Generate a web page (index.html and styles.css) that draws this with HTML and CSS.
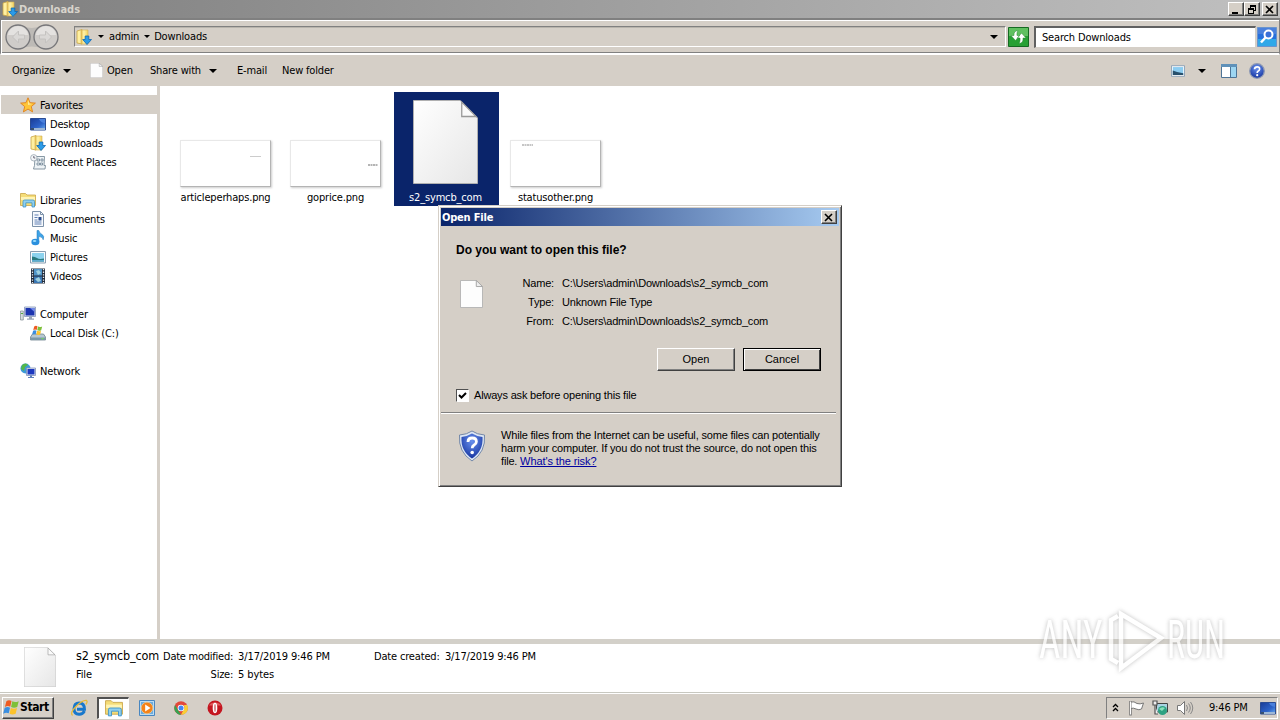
FILE: index.html
```html
<!DOCTYPE html>
<html lang="en">
<head>
    <meta charset="UTF-8">
    <meta name="viewport" content="width=device-width, initial-scale=1.0">
    <title>Downloads</title>
    <link rel="stylesheet" href="styles.css">
</head>
<body>

    <!-- Shared icons -->
    <svg class="defs" width="0" height="0">
        <defs>
            <linearGradient id="paper" x1="0" y1="0" x2="1" y2="1">
                <stop offset="0" stop-color="#fff"/><stop offset="1" stop-color="#e6e6e6"/>
            </linearGradient>
            <linearGradient id="folder" x1="0" y1="0" x2="1" y2="0">
                <stop offset="0" stop-color="#e0b848"/><stop offset="0.4" stop-color="#fff3a8"/><stop offset="1" stop-color="#f0d060"/>
            </linearGradient>
            <linearGradient id="screen" x1="0" y1="0" x2="1" y2="1">
                <stop offset="0" stop-color="#1a3c96"/><stop offset="0.6" stop-color="#2c62c8"/><stop offset="1" stop-color="#6aaef0"/>
            </linearGradient>
            <radialGradient id="blueball" cx="0.5" cy="0.3" r="0.7">
                <stop offset="0" stop-color="#6a92ee"/><stop offset="1" stop-color="#1534a0"/>
            </radialGradient>
        </defs>
        <symbol id="i-downloads" viewBox="0 0 16 16">
            <path d="M1 2l5-1.5V15L1 14z" fill="#fff0a0" stroke="#c9a544" stroke-width=".8"/>
            <path d="M5 1h7v14H5z" fill="url(#folder)" stroke="#d4b050" stroke-width=".6"/>
            <path d="M9.200 7h3.600v3.500H15.500L11 15.500 6.700 10.500H9.200z" fill="#2b9be8" stroke="#0b68b4" stroke-width=".8"/>
        </symbol>
        <symbol id="i-desktop" viewBox="0 0 16 16">
            <path d="M.5 2.500h15V14H.5z" fill="url(#screen)" stroke="#2a4c94"/>
            <path d="M9 3h6v4q-4 0-6-4z" fill="#4a80dc"/>
            <path d="M1 12h14v2H1z" fill="#9db7d6"/><path d="M1 12h3v2H1z" fill="#38506f"/>
        </symbol>
        <symbol id="i-star" viewBox="0 0 16 16">
            <path d="M8 .8l2.100 4.900 5.300.4-4.100 3.500 1.300 5.300L8 12.100l-4.600 2.800 1.300-5.300L.6 6.100l5.300-.4z" fill="#ffc538" stroke="#e0801c" stroke-width=".9"/>
            <path d="M8 3l1.300 3.500 3 .4-4.300 1z" fill="#ffeb9a"/>
        </symbol>
        <symbol id="i-recent" viewBox="0 0 16 16">
            <path d="M5 2.500h9.500l-.5 9h1.500l-.5 3.500H3.500l1-3.500z" fill="#eef3f6" stroke="#7a8c9a" stroke-width=".9"/>
            <path d="M7 5h2.500v2H7zM7 9h2.500v2H7zM11 5h2v2h-2zM10.500 9h2v2h-2z" fill="none" stroke="#6f8396" stroke-width=".8"/>
            <circle cx="3.800" cy="3.800" r="3.200" fill="#f4f6f8" stroke="#98a4ae" stroke-width=".8"/>
            <path d="M3.800 2v2h1.500" fill="none" stroke="#667"/>
        </symbol>
        <symbol id="i-library" viewBox="0 0 16 16">
            <path d="M.5 1.500h5L7 3h8.500v10.500H.5z" fill="#f5dd78" stroke="#c9a548" stroke-width=".8"/>
            <path d="M1 5h14v3H1z" fill="#fff4b4"/>
            <path d="M3 15V9.500Q3 8 4.500 8H13q1.500 0 1.500 1.500V15H12v-4.200H5.800V15z" fill="#8fd0f0" stroke="#3e93c8" stroke-width=".8"/>
        </symbol>
        <symbol id="i-document" viewBox="0 0 16 16">
            <path d="M2.500.5h8l3 3v12h-11z" fill="#f6f9fd" stroke="#7d92aa"/>
            <path d="M10.500.5v3h3" fill="none" stroke="#7d92aa"/>
            <path d="M4.500 4h4M4.500 6.500h3M4.500 9h3M4.500 11h7M4.500 13h7" stroke="#6180b4"/><path d="M8.500 6h3v3.500h-3z" fill="#2b4c8c"/>
        </symbol>
        <symbol id="i-music" viewBox="0 0 16 16">
            <path d="M7 .5h1.800q.5 2.500 3 3.700 3 1.800 1.400 5.600-.3-2.800-4.400-3.500V12H7z" fill="#3fa4e8" stroke="#1b74b8" stroke-width=".5"/>
            <ellipse cx="5.400" cy="12" rx="4" ry="3.300" fill="#2a90de"/><ellipse cx="4.600" cy="11" rx="1.800" ry="1.100" fill="#9adcfc"/>
        </symbol>
        <symbol id="i-picture" viewBox="0 0 16 16">
            <path d="M.5 2.500h15v11.500H.5z" fill="#f8fbfd" stroke="#8a9db0"/>
            <path d="M2 4h12v8.500H2z" fill="#8cd2ee"/><path d="M2 7.500q3 0 5 1.500t7 .5v3H2z" fill="#2a7b80"/><path d="M2 11h12v1.500H2z" fill="#5babd0"/>
        </symbol>
        <symbol id="i-video" viewBox="0 0 16 16">
            <path d="M1 .5h14v15H1z" fill="#222c3c"/><path d="M4 1h8v6.500H4z" fill="#5095c8"/><path d="M4 8.500h8V15H4z" fill="#3a77b4"/>
            <path d="M6 3l3-1 2 3-3 2zM5 11l4-2 2 4-3 1z" fill="#9fd0df"/>
            <path d="M2.500 1v14M13.500 1v14" stroke="#e8edf2" stroke-width="1.300" stroke-dasharray="1.300 1.300"/>
        </symbol>
        <symbol id="i-computer" viewBox="0 0 16 16">
            <path d="M.5 5h2.800v9H.5z" fill="#d6dcdf" stroke="#7c8890" stroke-width=".7"/><path d="M1 7.500h2" stroke="#5a4"/>
            <path d="M4.500 1h11v9.500h-11z" fill="#dfe6f2" stroke="#8494b8" stroke-width=".8"/><path d="M5.500 2h9v7.500h-9z" fill="#1c34b0"/><path d="M10 2h4.500v4z" fill="#7088e8"/>
            <path d="M9 10.500h3v2H14v1.200H7v-1.200h2z" fill="#98a4b8"/>
        </symbol>
        <symbol id="i-flag" viewBox="0 0 16 16">
            <path d="M3.200 2Q5.500.5 8 1.800L6.800 7.300Q4.500 6 1.800 7.500z" fill="#ee5b22"/>
            <path d="M8.800 2.200Q11.500 3.500 14.800 2L13.400 7.500Q10.500 9 7.600 7.600z" fill="#7ec03a"/>
            <path d="M1.600 8.300Q4.300 7 6.600 8.200L5.400 13.500Q3 12.300.2 13.800z" fill="#3a8ee0"/>
            <path d="M7.400 8.500Q10.400 9.900 13.200 8.400L11.900 13.800Q9 15.300 6.200 13.900z" fill="#fcc32c"/>
        </symbol>
        <symbol id="i-disk" viewBox="0 0 16 16">
            <path d="M2.500 9h11l2 3v3H.5v-3z" fill="#b7c8d2" stroke="#6f8490" stroke-width=".8"/><path d="M1 12.500h14V15H1z" fill="#7b98a8"/><path d="M11.500 13.700h2" stroke="#6eea4c"/>
            <use href="#i-flag" x="2" y="0" width="11" height="11"/>
        </symbol>
        <symbol id="i-network" viewBox="0 0 16 16">
            <circle cx="5.500" cy="5.500" r="5" fill="#3c98d8"/><path d="M2 2q4-3 6 0l-3 2-1 4-3-2zM6 6l4 0-2 4z" fill="#52b848"/>
            <path d="M6.500 5h9v7.500h-9z" fill="#dfe6f2" stroke="#8090b8" stroke-width=".8"/><path d="M7.500 6h7v5.500h-7z" fill="#1c38c0"/>
            <path d="M10 12.500h2v1.500h2v1H8v-1h2z" fill="#5d7fba"/>
        </symbol>
        <symbol id="i-file" viewBox="0 0 66 84" preserveAspectRatio="none">
            <path d="M.5.500H48L65.500 18V83.500H.5z" fill="url(#paper)" stroke="#b0b0b0" stroke-width="1"/>
            <path d="M49.500 2V16.500H64z" fill="#fafafa" stroke="#999" stroke-width="1.300"/>
        </symbol>
        <symbol id="i-page" viewBox="0 0 24 30" preserveAspectRatio="none">
            <path d="M.5.500H17L23.500 7V29.500H.5z" fill="#fdfdfd" stroke="#b4b4b4"/>
            <path d="M17 .5V7h6.500z" fill="#eee" stroke="#a4a4a4"/>
        </symbol>
    </svg>

    <div class="window">
        <div class="titlebar">
            <svg class="icon"><use href="#i-downloads"/></svg>
            <span class="title">Downloads</span>
            <div class="controls">
                <span class="ctl"><svg width="10" height="9"><path d="M1 7h6v2H1z"/></svg></span>
                <span class="ctl"><svg width="10" height="9"><path d="M3 0h6v6H7V5h1V2H4v1H3zM1 3h6v6H1zM2 5v3h4V5z" fill-rule="evenodd"/></svg></span>
                <span class="ctl close"><svg width="10" height="9"><path d="M1 1l7 7M8 1L1 8" stroke="#000" stroke-width="1.600"/></svg></span>
            </div>
        </div>

        <!-- Navigation -->
        <div class="navbar">
            <svg class="travel" width="56" height="30" viewBox="0 0 56 30">
                <path d="M13 3Q28 9 42 3V27Q28 22 13 27z" fill="#bdbab6"/>
                <g fill="#cfccc9" stroke="#77777a" stroke-width="1.300"><circle cx="14" cy="15" r="12"/><circle cx="42" cy="15" r="12"/></g>
                <path d="M4 13a10 9 0 0 1 20 0zM32 13a10 9 0 0 1 20 0z" fill="#e4e2e0"/>
                <path d="M14.500 9l-6 6 6 6v-4h6v-4h-6zM41.500 9l6 6-6 6v-4h-6v-4h6z" fill="#dad8d6" stroke="#c4c2c0"/>
            </svg>
            <div class="address">
                <svg class="icon"><use href="#i-downloads"/></svg>
                <i class="arrow"></i><span class="crumb admin">admin</span>
                <i class="arrow"></i><span class="crumb">Downloads</span>
                <i class="arrow big"></i>
            </div>
            <svg class="refresh" width="21" height="20" viewBox="0 0 21 20">
                <path d="M.5.500h20v19H.5z" fill="#28a034" stroke="#166a22"/><path d="M1 1h19v8H1z" fill="#60c060"/>
                <path d="M10 3.500Q5.500 4 6 8.500H3l4.500 5 4-5H9q-.5-3 1-5zM11 16.500q4.500-.5 4-5.500h3l-4.500-5-4 5H12q.5 3-1 5.500z" fill="#fff" stroke="#2a8a32" stroke-width=".5"/>
            </svg>
            <div class="search">Search Downloads</div>
            <svg class="go" width="20" height="20" viewBox="0 0 20 20">
                <path d="M.5.500h19v19H.5z" fill="#2670dc" stroke="#6a94cc"/><path d="M1 12h18v7H1z" fill="#30a8e8"/><path d="M1 1h18v6H1z" fill="#4a80dc"/>
                <circle cx="11.500" cy="7.500" r="4" fill="#3a70d8" stroke="#fff" stroke-width="2"/><path d="M8.500 10.500L4 15.500" stroke="#fff" stroke-width="2.500"/>
            </svg>
        </div>

        <!-- Command bar -->
        <div class="toolbar">
            <span class="cmd organize">Organize</span><i class="arrow big"></i>
            <svg class="doc"><use href="#i-page"/></svg><span class="cmd open">Open</span>
            <span class="cmd share">Share with</span><i class="arrow big"></i>
            <span class="cmd email">E-mail</span>
            <span class="cmd">New folder</span>
            <div class="views">
                <svg width="14" height="12" viewBox="0 0 16 13"><path d="M.5.500h15v12H.5z" fill="#fff" stroke="#8098b0"/><path d="M2 2h12v9H2z" fill="#8cccf0"/><path d="M2 6l5 1.500 7 1.500v2H2z" fill="#28506c"/></svg>
                <i class="arrow big"></i>
                <svg class="pane" width="16" height="14"><path d="M.5.500h15v13H.5z" fill="#fff" stroke="#4d7496"/><path d="M0 0h16v3H0z" fill="#5f91b9"/><path d="M10 3h5v10h-5z" fill="#9dd6f2"/><path d="M9.500 3v10" stroke="#4d7496"/></svg>
                <svg width="16" height="16"><circle cx="8" cy="8" r="7.300" fill="url(#blueball)" stroke="#8d99b4" stroke-width="1.300"/><path d="M5.500 6.200Q5.700 3.800 8.200 3.800T10.600 6.200Q10.500 7.500 9 8.300 8.200 8.800 8.200 10" fill="none" stroke="#fff" stroke-width="1.700"/><circle cx="8.200" cy="12.200" r="1.100" fill="#fff"/></svg>
            </div>
        </div>

        <div class="content">
            <div class="sidebar">
                <div class="item root active"><svg class="icon"><use href="#i-star"/></svg>Favorites</div>
                <div class="item"><svg class="icon"><use href="#i-desktop"/></svg>Desktop</div>
                <div class="item"><svg class="icon"><use href="#i-downloads"/></svg>Downloads</div>
                <div class="item"><svg class="icon"><use href="#i-recent"/></svg>Recent Places</div>
                <div class="item root group"><svg class="icon"><use href="#i-library"/></svg>Libraries</div>
                <div class="item"><svg class="icon"><use href="#i-document"/></svg>Documents</div>
                <div class="item"><svg class="icon"><use href="#i-music"/></svg>Music</div>
                <div class="item"><svg class="icon"><use href="#i-picture"/></svg>Pictures</div>
                <div class="item"><svg class="icon"><use href="#i-video"/></svg>Videos</div>
                <div class="item root group"><svg class="icon"><use href="#i-computer"/></svg>Computer</div>
                <div class="item"><svg class="icon"><use href="#i-disk"/></svg>Local Disk (C:)</div>
                <div class="item root group"><svg class="icon"><use href="#i-network"/></svg>Network</div>
            </div>
            <div class="files">
                <div class="file"><svg class="thumb"><path d="M69 15.500h11" stroke="#ccc"/></svg><span>articleperhaps.png</span></div>
                <div class="file"><svg class="thumb"><path d="M77 24h10" stroke="#b4b4b4" stroke-width="2" stroke-dasharray="2 .5"/></svg><span>goprice.png</span></div>
                <div class="file selected"><svg class="bigfile"><use href="#i-file"/></svg><span>s2_symcb_com</span></div>
                <div class="file"><svg class="thumb"><path d="M11 4h11" stroke="#b4b4b4" stroke-width="1.500" stroke-dasharray="2 .5"/></svg><span>statusother.png</span></div>
            </div>
        </div>

        <!-- Details pane -->
        <div class="details">
            <svg class="preview"><use href="#i-file"/></svg>
            <div class="col name"><span class="fname">s2_symcb_com</span><span>File</span></div>
            <div class="col labels"><span>Date modified:</span><span>Size:</span></div>
            <div class="col values"><span>3/17/2019 9:46 PM</span><span>5 bytes</span></div>
            <div class="col created"><span>Date created:</span></div>
            <div class="col"><span>3/17/2019 9:46 PM</span></div>
        </div>
    </div>

    <div class="taskbar">
        <div class="start"><svg width="17" height="17"><use href="#i-flag"/></svg>Start</div>
        <div class="task"><svg width="18" height="18" viewBox="0 0 18 18"><path d="M14.500 12Q12.500 15.500 9 15.300 4 15 4 9.500 4.200 4.200 9.200 4q5.300.2 5.300 6.200H7" fill="none" stroke="#1878cc" stroke-width="2.900"/><path d="M2.500 16.500Q-.5 14 6 7.500T16.500 1.500q1.500 1-.7 4" fill="none" stroke="#e8ba35" stroke-width="1.300"/></svg></div>
        <div class="task pressed"><svg width="18" height="18"><use href="#i-library"/></svg></div>
        <div class="task"><svg width="16" height="16"><path d="M.5.500h15v15H.5z" fill="#b9dcf4" stroke="#4886c0"/><path d="M2 2h12v12H2z" fill="#6dabdc"/><circle cx="8" cy="8" r="5.800" fill="#f48218" stroke="#ffcf88" stroke-width=".7"/><path d="M6.200 4.500L11.500 8l-5.300 3.500z" fill="#fff"/></svg></div>
        <div class="task"><svg width="14" height="14" viewBox="0 0 14 14"><circle cx="7" cy="7" r="6.800" fill="#e2483a"/><path d="M1 4L5.200 11 7 13.800A6.800 6.800 0 0 1 1 4z" fill="#35a351"/><path d="M7 13.800L10.500 7 10 4h3.200A6.800 6.800 0 0 1 7 13.800z" fill="#f8cf35"/><circle cx="7" cy="7" r="3.300" fill="#fff"/><circle cx="7" cy="7" r="2.500" fill="#4285f4"/></svg></div>
        <div class="task"><svg width="16" height="16"><circle cx="8" cy="8" r="7.500" fill="#c41620"/><path d="M2 5.500a6.500 5 0 0 1 12 0z" fill="#e05a5c"/><ellipse cx="8" cy="8" rx="2.300" ry="5.200" fill="#fff"/><ellipse cx="8" cy="8" rx=".6" ry="4" fill="#c04048"/></svg></div>
        <div class="tray">
            <svg class="chevron" width="7" height="9"><path d="M1 4l2.500-2.500L6 4M1 8l2.500-2.500L6 8" fill="none" stroke="#000" stroke-width="1.300"/></svg>
            <svg class="action" width="17" height="16"><path d="M2.500 1v14.500" stroke="#777" stroke-width="2.500"/><path d="M3 2Q6 1 9 3.500q3 1 6.500-.5l-2 6Q11 10.500 8 9 5 7.500 3 8.500z" fill="#fff" stroke="#777"/><path d="M2.500 1.500v13" stroke="#fff"/></svg>
            <svg class="net" width="17" height="16"><path d="M4.500 3.500h11V12h-11z" fill="#a9d4e2" stroke="#444"/><path d="M1 1h4v4H1zM3 5v9h3" fill="#eee" stroke="#555" stroke-width="1.200"/><circle cx="10.500" cy="10.500" r="4.500" fill="#2da282"/><path d="M7 9q3-3 6-1l-3 3z" fill="#8ce0bc"/></svg>
            <svg class="sound" width="18" height="16"><path d="M1.500 5.500h3l4-4v13l-4-4h-3z" fill="#fff" stroke="#777"/><path d="M10.500 5q2 3 0 6M12.500 3.500q3.500 4.500 0 9M14.500 2q4.500 6 0 12" fill="none" stroke="#888"/></svg>
            <span class="clock">9:46 PM</span>
            <svg class="icon"><use href="#i-desktop"/></svg>
        </div>
    </div>

    <!-- Open file prompt -->
    <div class="dialog">
        <div class="dialog-title">Open File<span class="ctl"><svg width="10" height="9"><path d="M1 1l7 7M8 1L1 8" stroke="#000" stroke-width="1.600"/></svg></span></div>
        <div class="dialog-body">
            <div class="question">Do you want to open this file?</div>
            <div class="info">
                <svg class="doc"><use href="#i-page"/></svg>
                <dl>
                    <dt>Name:</dt><dd class="path">C:\Users\admin\Downloads\s2_symcb_com</dd>
                    <dt>Type:</dt><dd>Unknown File Type</dd>
                    <dt>From:</dt><dd class="path">C:\Users\admin\Downloads\s2_symcb_com</dd>
                </dl>
            </div>
            <div class="buttons"><div class="btn">Open</div><div class="btn default">Cancel</div></div>
            <div class="ask"><span class="check"><svg width="9" height="9"><path d="M1 4l2.500 2.500L8 2" fill="none" stroke="#000" stroke-width="2"/></svg></span><span class="ask-label">Always ask before opening this file</span></div>
        </div>
        <div class="warning">
            <svg class="shield" width="28" height="32" viewBox="0 0 28 32">
                <path d="M14 1Q19 4.500 26.500 5 28 22 14 31 0 22 1.500 5 9 4.500 14 1z" fill="#dce6f4" stroke="#7488a8"/>
                <path d="M14 3.500Q19 6.500 24.500 7 25.500 21 14 28.500 2.500 21 3.500 7 9 6.500 14 3.500z" fill="url(#blueball)"/>
                <path d="M10 12q0-4 4.200-4t4.200 3.800q0 2-2.600 3.500-1.600 1-1.600 3" fill="none" stroke="#fff" stroke-width="2.800"/><circle cx="14.200" cy="22.500" r="1.800" fill="#fff"/>
            </svg>
            <div class="note">
                <div>While files from the Internet can be useful, some files can potentially</div>
                <div>harm your computer. If you do not trust the source, do not open this</div>
                <div>file. <a>What's the risk?</a></div>
            </div>
        </div>
    </div>

    <div class="watermark">
        <span class="word">ANY</span>
        <svg width="64" height="72" viewBox="0 0 64 72"><path d="M15 9L8 13V52L15 56M18 7L58 31 18 61z" fill="none" stroke="#fff" stroke-width="4.500"/></svg>
        <span class="word run">RUN</span>
    </div>

</body>
</html>
```

FILE: styles.css
```css
* {
    box-sizing: border-box;
}
body {
    margin: 0;
    width: 1280px;
    height: 720px;
    overflow: hidden;
    display: flex;
    flex-direction: column;
    font-family: "DejaVu Sans Condensed", "DejaVu Sans", sans-serif;
    font-stretch: condensed;
    font-size: 11px;
    letter-spacing: -0.17px;
    line-height: 13px;
    color: #000;
    background: #d5cfc7;
    white-space: nowrap;
}
svg {
    display: block;
    flex: none;
}
.defs {
    position: absolute;
}
.icon {
    width: 16px;
    height: 16px;
}
.window {
    height: 693px;
    display: flex;
    flex-direction: column;
}

/* title bar */
.titlebar {
    height: 18px;
    display: flex;
    align-items: center;
    padding: 0 2px;
    background: linear-gradient(90deg, #808080, #c0c0c0);
    color: #d8d4cc;
}
.title {
    margin-left: 1px;
    font-weight: bold;
    letter-spacing: 0;
}
.controls {
    display: flex;
    margin-left: auto;
}
.ctl {
    width: 16px;
    height: 14px;
    display: flex;
    align-items: center;
    justify-content: center;
    background: #d5cfc7;
    border: 1px solid;
    border-color: #fff #404040 #404040 #fff;
    box-shadow: inset -1px -1px #808080;
}
.close {
    margin-left: 2px;
}

/* navigation bar */
.navbar {
    height: 37px;
    display: flex;
    align-items: center;
    padding: 0 2px 0 3px;
    border: solid;
    border-width: 2px 1px 2px 1px;
    border-color: #808080 #808080 #fff #808080;
    box-shadow: inset 1px 1px #fff, inset 0 -1px #808080;
}
.travel {
    width: 56px;
}
.address {
    width: 932px;
    height: 21px;
    margin-left: 14px;
    padding-left: 1px;
    display: flex;
    align-items: center;
    border: 1px solid;
    border-color: #808080 #fff #fff #808080;
    box-shadow: inset 0 1px #b8b4ac;
}
.arrow {
    border: 3px solid transparent;
    border-top-color: #000;
    border-bottom: 0;
}
.arrow.big {
    border-width: 4px 4px 0;
}
.address .arrow {
    margin-left: 6px;
    margin-right: 5px;
}
.admin + .arrow {
    margin-left: 5px;
    margin-right: 4px;
}
.address .arrow.big {
    margin-left: auto;
    margin-right: 7px;
}
.refresh {
    margin-left: 2px;
}
.search {
    width: 222px;
    height: 22px;
    margin-left: 5px;
    padding: 3px 6px;
    background: #fff;
    border: 2px solid;
    border-width: 2px 1px 1px 2px;
    border-color: #606060 #d5cfc7 #d5cfc7 #606060;
}
.go {
    margin-left: 1px;
}

/* toolbar */
.toolbar {
    height: 31px;
    display: flex;
    align-items: center;
    padding-left: 12px;
}
.organize {
    width: 51px;
}
.toolbar .doc {
    width: 13px;
    height: 15px;
    margin: 0 4px 0 19px;
}
.open {
    width: 43px;
}
.share {
    width: 59px;
}
.email {
    margin-left: 20px;
    width: 45px;
}
.views {
    display: flex;
    align-items: center;
    margin-left: auto;
    margin-right: 15px;
}
.views .arrow {
    margin: 0 15px 0 13px;
}
.pane {
    margin-right: 12px;
}

/* sidebar and files */
.content {
    height: 553px;
    display: flex;
    background: #fff;
}
.sidebar {
    width: 160px;
    padding-top: 9px;
    border-right: 3px solid #d5cfc7;
}
.item {
    height: 19px;
    display: flex;
    align-items: center;
    padding-top: 1px;
    padding-left: 30px;
    gap: 4px;
}
.item .icon {
    margin-top: -1px;
}
.item.root {
    padding-left: 20px;
}
.item.group {
    margin-top: 19px;
}
.item.active {
    background: #d5cfc7;
    margin-left: 1px;
    padding-left: 19px;
}
.files {
    display: flex;
    gap: 5px;
    padding: 6px 0 0 14px;
}
.file {
    width: 105px;
    height: 114px;
    display: flex;
    flex-direction: column;
    align-items: center;
    justify-content: flex-end;
    padding-right: 2px;
    padding-bottom: 2px;
}
.file span {
    margin-top: 4px;
}
.thumb {
    width: 91px;
    height: 47px;
    border: 1px solid #e8e8e8;
    border-right-color: #b4b4b4;
    border-bottom-color: #b4b4b4;
    box-shadow: 1px 1px 2px #ccc;
}
.selected {
    background: #0a246a;
    color: #fff;
}
.bigfile {
    width: 65px;
    height: 84px;
}
.selected span {
    margin-top: 7px;
}

/* details pane */
.details {
    height: 54px;
    display: flex;
    padding: 6px 0 0 24px;
    border-top: 5px solid #d3d0c9;
    border-bottom: 1px solid #c8c8c0;
    background: #fff;
}
.preview {
    width: 32px;
    height: 40px;
    margin-top: -3px;
}
.col {
    display: flex;
    flex-direction: column;
    gap: 5px;
}
.name {
    width: 87px;
    margin-left: 20px;
}
.fname {
    font-size: 12.5px;
    line-height: 12px;
    margin-bottom: 1px;
}
.labels {
    width: 70px;
    align-items: flex-end;
    margin-right: 5px;
    letter-spacing: -0.25px;
}
.values {
    width: 136px;
    letter-spacing: -0.1px;
}
.created {
    width: 71px;
}

/* taskbar */
.taskbar {
    height: 27px;
    display: flex;
    align-items: center;
    padding: 1px 2px 0;
    border-top: 1px solid #fff;
}
.start {
    width: 52px;
    height: 22px;
    display: flex;
    align-items: center;
    padding-left: 0;
    font-size: 12px;
    font-weight: bold;
    letter-spacing: -0.4px;
    border: 1px solid;
    border-color: #fff #404040 #404040 #fff;
    box-shadow: inset -1px -1px #808080;
}
.task {
    width: 32px;
    height: 22px;
    display: flex;
    align-items: center;
    justify-content: center;
    margin-right: 2px;
}
.start + .task {
    margin-left: 9px;
}
.pressed {
    background: #fff;
    border: 2px solid;
    border-width: 2px 1px 1px 2px;
    border-color: #505050 #fff #fff #505050;
}
.tray {
    width: 172px;
    height: 22px;
    display: flex;
    align-items: center;
    margin-left: auto;
    padding-left: 5px;
    border: 1px solid;
    border-color: #808080 #fff #fff #808080;
}
.action {
    margin-left: 9px;
}
.net {
    margin-left: 7px;
}
.sound {
    margin-left: 7px;
}
.clock {
    width: 51px;
    margin-left: 15px;
}

/* dialog */
.dialog {
    position: absolute;
    left: 438px;
    top: 205px;
    width: 404px;
    height: 282px;
    padding: 1px;
    background: #d5cfc7;
    border: 1px solid;
    border-color: #d5cfc7 #404040 #404040 #d5cfc7;
    box-shadow: inset 1px 1px #fff, inset -1px -1px #808080;
    font-family: "Liberation Sans", Arial, sans-serif;
    letter-spacing: -0.18px;
}
.dialog-title {
    height: 18px;
    margin: 1px 1px 0;
    padding: 0 2px 0 1px;
    display: flex;
    align-items: center;
    justify-content: space-between;
    background: linear-gradient(90deg, #0a246a, #a6caf0);
    color: #fff;
    font-family: "DejaVu Sans Condensed", "DejaVu Sans", sans-serif;
    font-weight: bold;
    letter-spacing: -0.2px;
}
.dialog-body {
    height: 187px;
    padding: 18px 20px 0 15px;
    border-bottom: 1px solid #808080;
    box-shadow: 0 1px #fff;
    margin: 0 4px 0 1px;
}
.question {
    font-weight: bold;
    font-size: 12px;
    letter-spacing: 0;
}
.info {
    display: flex;
    margin-top: 17px;
}
.info .doc {
    width: 23px;
    height: 28px;
    margin: 6px 0 0 4px;
}
dl {
    display: grid;
    grid-template-columns: 71px auto;
    column-gap: 8px;
    line-height: 19px;
    margin: 0;
}
dt {
    text-align: right;
}
dd {
    margin: 0;
}
.buttons {
    display: flex;
    justify-content: flex-end;
    gap: 8px;
    margin: 17px -5px 0 0;
}
.btn {
    width: 78px;
    height: 23px;
    line-height: 20px;
    text-align: center;
    letter-spacing: 0;
    border: 1px solid;
    border-color: #fff #404040 #404040 #fff;
    box-shadow: inset -1px -1px #808080;
}
.default {
    border-color: #000;
    box-shadow: inset 1px 1px #fff, inset -1px -1px #404040;
}
.ask {
    display: flex;
    align-items: center;
    gap: 5px;
    margin-top: 17px;
}
.ask-label {
    padding-top: 1px;
}
.check {
    width: 13px;
    height: 13px;
    padding: 1px;
    background: #fff;
    border: 1px solid;
    border-color: #505050 #fff #fff #505050;
}
.warning {
    display: flex;
    padding: 16px 0 0 18px;
    gap: 15px;
}
.shield {
    margin-top: 1px;
}
.note a {
    color: #0000a0;
    text-decoration: underline;
    letter-spacing: -0.1px;
}

/* watermark over the bottom right corner */
.watermark {
    position: absolute;
    left: 1039px;
    top: 607px;
    height: 72px;
    display: flex;
    color: #fff;
    font: 53px/66px "Roboto Condensed", Roboto, sans-serif;
    font-stretch: condensed;
    filter: drop-shadow(0 0 2px #aaa);
    opacity: 0.75;
}
.word {
    width: 64px;
    letter-spacing: 0;
    transform: scaleX(0.7);
    transform-origin: 0 0;
}
.run {
    transform: scaleX(0.64);
}
```
